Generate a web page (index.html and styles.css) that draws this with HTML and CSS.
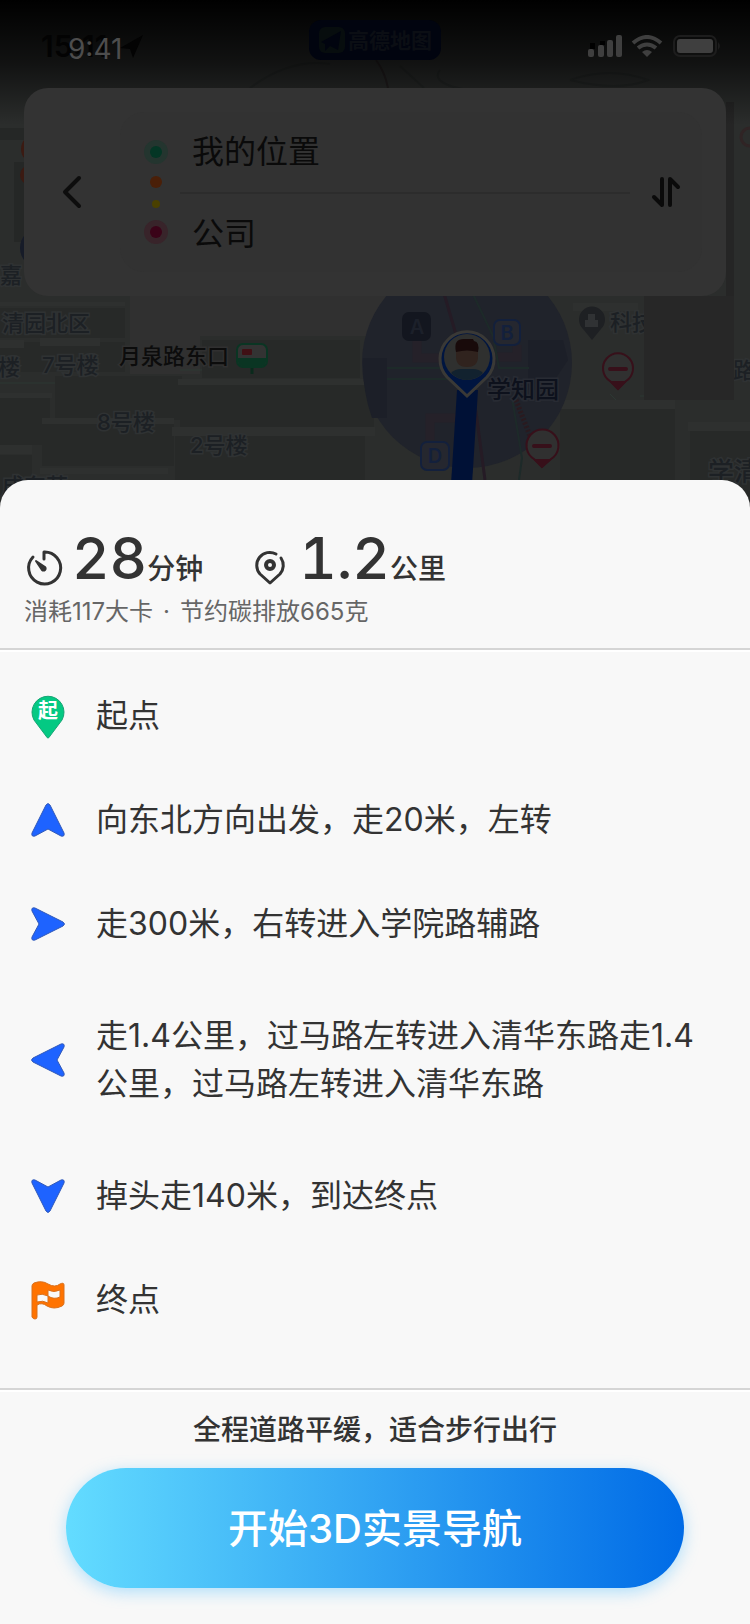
FILE: index.html
```html
<!DOCTYPE html>
<html lang="zh-CN">
<head>
  <meta charset="UTF-8">
  <meta name="viewport" content="width=device-width, initial-scale=1.0">
  <title>步行导航</title>
  <link rel="stylesheet" href="styles.css">
</head>
<body>
  <div class="top">
    <svg class="map" viewBox="0 0 750 510" preserveAspectRatio="xMidYMin slice" aria-hidden="true">
      <defs>
        <linearGradient id="fade" x1="0" y1="0" x2="0" y2="1">
          <stop offset="0" stop-color="#000"/>
          <stop offset="0.5" stop-color="#000" stop-opacity="0.6"/>
          <stop offset="1" stop-color="#000" stop-opacity="0"/>
        </linearGradient>
      </defs>
      <rect width="750" height="510" fill="#2b2d2c"/>

      <!-- buildings -->
      <path fill="#303030" d="M130 296h260v40H200v38H130z"/>
      <path fill="#272928" d="M0 308h125v30H0zM0 342h125v30H0zM202 340h158v38H202zM55 376h127v44H55zM180 385h194v42H180zM0 398h50v47H0zM42 424h132v42H42zM175 436h190v60H175zM0 455h32v40H0zM560 409h115v90H560zM690 431h60v70h-60z"/>
      <path fill="#2e302f" d="M0 302h125v4H0zM0 340h24v8H0zM40 338h60v8H40zM178 379h195v6H178zM0 393h52v5H0zM42 418h132v6H42zM172 427h203v9H172zM0 445h32v9H0zM40 468h128v6H40zM555 400h120v9H555zM688 422h62v9h-62zM573 303h65v8h-65z"/>
      <path fill="none" stroke="#2c3833" d="M0 383h55M180 370h22M610 394l6 6M640 396h35"/>
      <path fill="none" stroke="#252827" stroke-width="2" d="M250 88q40-30 80-24M440 70q-14 18 60 24M570 80q40-14 78 0q-30 12-78 0M400 66l24 22"/>
      <path fill="none" stroke="#241f20" stroke-width="2" d="M376 60q9 12 12 28"/>
      <path fill="#252525" d="M726 102h8v195h-8z"/>
      <path fill="#252726" d="M0 128h24v12H0zM14 162h10v80H14z"/>

      <!-- things peeking out from under the card -->
      <circle cx="36" cy="149" r="15" fill="#3b1a12"/>
      <circle cx="30" cy="175" r="10" fill="#3b1a12"/>
      <circle cx="40" cy="248" r="20" fill="#161b28"/>
      <circle cx="750" cy="137" r="9" fill="none" stroke="#302425" stroke-width="3"/>

      <!-- position range -->
      <circle cx="467" cy="363" r="105" fill="#20232b"/>
      <path fill="#1c1f28" d="M363 358h24v60h-15q-10-28-9-60zM528 340h35l5 20-20 30h-20z"/>
      <path fill="none" stroke="#251b25" stroke-width="3" d="M443 290l21 72 12 50 9 68"/>
      <path fill="none" stroke="#252129" stroke-width="9" d="M417 340v18h22M517 345v12h-24M430 440v-22h28"/>
      <path fill="none" stroke="#1d2a29" stroke-width="2" d="M471 290l22 46 6 32h30M387 368h60M387 379h60M512 398l10 60-3 22"/>
      <path fill="none" stroke="#2a1a1f" stroke-width="5" stroke-dasharray="2 2" d="M516 400l14 36"/>
      <path fill="#001136" d="M457 390h21l-7 110h-21z"/>

      <g class="label">
        <text x="0" y="283">嘉</text>
        <text x="2" y="331">清园北区</text>
        <text x="-2" y="375">楼</text>
        <text x="42" y="373">7号楼</text>
        <text x="97" y="430">8号楼</text>
        <text x="190" y="453">2号楼</text>
        <text x="2" y="494">成东苑</text>
        <text x="610" y="330">科技</text>
        <text x="733" y="378">路</text>
        <text x="708" y="481" font-size="26">学清</text>
      </g>
      <path fill="#272727" d="M644 296h90v104h-90z"/>
      <text class="label-strong" x="119" y="364">月泉路东口</text>
      <text class="label-park" x="487" y="398">学知园</text>

      <!-- bus stop -->
      <path d="M252 366v8" stroke="#0a2a1c" stroke-width="3"/>
      <rect x="237" y="344" width="30" height="23" rx="6" fill="#333" stroke="#0a3523" stroke-width="2"/>
      <path d="M238 358h28v3q0 5-5 5h-18q-5 0-5-5z" fill="#0a3523"/>
      <rect x="242" y="349" width="10" height="6" rx="1" fill="#401015"/>

      <!-- subway exits -->
      <g font-size="20" font-weight="600" text-anchor="middle">
        <rect x="402" y="312" width="29" height="29" rx="7" fill="#13161f"/>
        <text x="417" y="334" fill="#1c202a">A</text>
        <rect x="494" y="320" width="26" height="25" rx="6" fill="#25272f" stroke="#13203c" stroke-width="2"/>
        <text x="507" y="340" fill="#13203c">B</text>
        <rect x="421" y="442" width="28" height="28" rx="6" fill="#25272f" stroke="#13203c" stroke-width="2"/>
        <text x="435" y="463" fill="#13203c">D</text>
      </g>

      <!-- poi -->
      <path fill="#1e2023" d="M592 340l-9-11a13 13 0 1 1 18 0z"/>
      <path fill="#303234" d="M585 327v-7h3v-6h7v6h3v7z"/>

      <!-- closed roads -->
      <g fill="#303030" stroke="#37101a" stroke-width="2">
        <path d="M618 389l-8-8a15 15 0 1 1 16 0z"/>
        <path d="M542 467l-8-8a16 16 0 1 1 17 0z"/>
      </g>
      <path fill="#37101a" d="M609 381h18l-9 9zM533 459h19l-10 9z"/>
      <path fill="none" stroke="#37101a" stroke-width="4" stroke-linecap="round" d="M610 369h16M534 446h16"/>

      <!-- avatar pin -->
      <path fill="#001540" stroke="#3a3936" stroke-width="3" d="M467 396l-20-19a27 27 0 1 1 40 0z"/>
      <circle cx="467" cy="357" r="23" fill="#2f302f"/>
      <path fill="#12222f" d="M451 373q4-4 10-4h12q6 0 10 4-7 7-16 7t-16-7z"/>
      <path fill="#30231e" d="M456 347h22v10q0 10-11 10t-11-10z"/>
      <path fill="#180a0a" d="M456 352q-3-13 8-13h9l1 2q6 1 4 11-11-3-22 0z"/>

      <rect width="750" height="125" fill="url(#fade)"/>

      <!-- brand badge -->
      <rect x="309" y="20" width="132" height="40" rx="12" fill="#01040f"/>
      <rect x="319" y="27" width="26" height="26" rx="6" fill="#070d0e"/>
      <path fill="#01040f" d="M321 42l20-11-3 19-8-4-5 5v-7z"/>
      <text x="348" y="48" font-size="21" font-weight="700" fill="#0b0e14">高德地图</text>

      <!-- old clock of the captured map -->
      <text x="41" y="57" font-size="30" font-weight="600" fill="#030303">15:11</text>
      <path fill="#030303" d="M120 48l23-13-10 23-3-9z"/>
    </svg>

    <header class="status">
      <span class="time">9:41</span>
      <svg class="status-icons" viewBox="0 0 134 24" aria-hidden="true">
        <path fill="#000" d="M2 8h5v6H2zM12 6h5v4h-5z"/>
        <g fill="#3f3f3f">
          <rect x="0" y="14" width="6" height="8" rx="2"/>
          <rect x="10" y="10" width="6" height="12" rx="2"/>
          <rect x="19" y="5" width="6" height="17" rx="2"/>
          <rect x="28" y="0" width="6" height="22" rx="2"/>
          <rect x="89" y="4" width="36" height="14" rx="3"/>
          <path d="M59 22l-5-5q5-4 10 0z"/>
        </g>
        <path fill="none" stroke="#3f3f3f" stroke-width="4" d="M45 8q14-12 28 0M50 13q9-7 18 0"/>
        <rect x="86" y="1" width="42" height="20" rx="6" fill="none" stroke="#1d1d1d" stroke-width="2"/>
        <path fill="#1d1d1d" d="M130 7q4 4 0 8z"/>
      </svg>
    </header>

    <section class="route-card">
      <button class="back" aria-label="返回">
        <svg width="24" height="40" viewBox="0 0 24 40"><path d="M19 6L5 20l14 14" fill="none" stroke="#0d0d0d" stroke-width="4" stroke-linecap="round" stroke-linejoin="round"/></svg>
      </button>
      <div class="route">
        <svg class="dots" width="24" height="104" viewBox="0 0 24 104" aria-hidden="true">
          <circle cx="12" cy="12" r="12" fill="#24352f"/>
          <circle cx="12" cy="12" r="6" fill="#043625"/>
          <circle cx="12" cy="42" r="6" fill="#4a1f08"/>
          <circle cx="12" cy="64" r="4" fill="#4a4000"/>
          <circle cx="12" cy="92" r="12" fill="#38242a"/>
          <circle cx="12" cy="92" r="6" fill="#3a0318"/>
        </svg>
        <div class="places">
          <div class="place">我的位置</div>
          <div class="place">公司</div>
        </div>
        <button class="swap" aria-label="交换起点和终点">
          <svg width="32" height="34" viewBox="0 0 32 34"><path d="M12 4v26l-8-8M20 30V4l8 8" fill="none" stroke="#0a0a0a" stroke-width="4" stroke-linecap="round" stroke-linejoin="round"/></svg>
        </button>
      </div>
    </section>
  </div>

  <main class="sheet">
    <section class="summary">
      <div class="stats">
        <div class="stat">
          <svg width="40" height="40" viewBox="1 1 40 40" fill="none" stroke="#333" stroke-width="3" stroke-linecap="round" stroke-linejoin="round">
            <path d="M21 12V5a16 16 0 1 1-11 5"/>
            <path fill="#333" stroke-width="2" d="M13 14l9 6a2 2 0 1 1-3 3z"/>
          </svg>
          <span class="number">28</span><span class="unit">分钟</span>
        </div>
        <div class="stat">
          <svg width="40" height="40" viewBox="1 1 40 40" fill="none" stroke="#333" stroke-width="3" stroke-linecap="round" stroke-linejoin="round">
            <path d="M26 7A13 13 0 0 0 10 27l10 9 10-9a13 13 0 0 0 1-16"/>
            <circle cx="20" cy="18" r="4" stroke-width="4"/>
          </svg>
          <span class="number">1.2</span><span class="unit">公里</span>
        </div>
      </div>
      <p class="burn">消耗117大卡<span class="dot">·</span>节约碳排放665克</p>
    </section>

    <ol class="steps">
      <li class="step">
        <svg class="step-icon" viewBox="0 0 48 48">
          <path fill="#04c983" stroke="#16a574" d="M24 46q-1 0-2-2L10 28a16 16 0 1 1 28 0L26 44q-1 2-2 2z"/>
          <text x="24" y="26" font-size="20" font-weight="700" text-anchor="middle" fill="#fff">起</text>
        </svg>
        <span>起点</span>
      </li>
      <li class="step">
        <svg class="step-icon" viewBox="0 0 48 48"><use href="#arrow"/></svg>
        <span>向东北方向出发，走20米，左转</span>
      </li>
      <li class="step">
        <svg class="step-icon" viewBox="0 0 48 48"><use href="#arrow" transform="rotate(90 24 24)"/></svg>
        <span>走300米，右转进入学院路辅路</span>
      </li>
      <li class="step step-long">
        <svg class="step-icon" viewBox="0 0 48 48"><use href="#arrow" transform="rotate(-90 24 24)"/></svg>
        <span>走1.4公里，过马路左转进入清华东路走1.4公里，过马路左转进入清华东路</span>
      </li>
      <li class="step">
        <svg class="step-icon" viewBox="0 0 48 48"><use href="#arrow" transform="rotate(180 24 24)"/></svg>
        <span>掉头走140米，到达终点</span>
      </li>
      <li class="step">
        <svg class="step-icon" viewBox="0 0 48 48">
          <path fill="#ff7300" stroke="#d9701c" fill-rule="evenodd" d="M8 10q0-2 2-3 8-3 14 1 7 4 12 0 4-2 4 1v18q0 2-2 3-8 4-15 0-5-4-10-1v12q0 2-2 2t-3-2zM13 19v7q6-2 11 1v-7q-6-3-11-1zM24 14v6q6 4 12 1v-7q-6 3-12 0z"/>
        </svg>
        <span>终点</span>
      </li>
    </ol>

    <footer class="actions">
      <p class="tip">全程道路平缓，适合步行出行</p>
      <button class="start">开始3D实景导航</button>
    </footer>
  </main>

  <svg class="sprite" width="0" height="0" aria-hidden="true">
    <symbol id="arrow" viewBox="0 0 48 48">
      <path fill="#1e63ff" stroke="#3159b8" stroke-linejoin="round" d="M22 9q2-3 4 0l14 28q1 4-3 3l-13-7-13 7q-4 1-3-3z"/>
    </symbol>
  </svg>
</body>
</html>
```
FILE: styles.css
```css
* {
  box-sizing: border-box;
}
body {
  margin: 0;
  min-height: 100vh;
  display: flex;
  flex-direction: column;
  background-color: #2b2d2c;
  color: #333;
  font-family: Inter, "Noto Sans CJK SC", sans-serif;
}
button {
  border: none;
  padding: 0;
  background: none;
  font-family: inherit;
  cursor: pointer;
}
p {
  margin: 0;
}
svg {
  display: block;
  flex: none;
}

/* Dimmed map with the route card */
.top {
  position: relative;
  padding-bottom: 184px;
}
.map {
  position: absolute;
  top: 0;
  left: 0;
  width: 100%;
  height: calc(100% + 30px);
}
.label {
  font-size: 22px;
  font-weight: 500;
  fill: #1c2024;
  stroke: #2f3233;
  stroke-width: 3px;
  paint-order: stroke;
}
.label-strong {
  font-size: 22px;
  font-weight: 500;
  fill: #0c0c0c;
  stroke: #303030;
  stroke-width: 3px;
  paint-order: stroke;
}
.label-park {
  font-size: 24px;
  font-weight: 500;
  fill: #0d111c;
  stroke: #282b33;
  stroke-width: 3px;
  paint-order: stroke;
}
.status {
  position: relative;
  height: 88px;
  padding: 10px 28px 0 68px;
  display: flex;
  align-items: center;
  justify-content: space-between;
}
.time {
  font-size: 28px;
  line-height: 32px;
  color: #4d4d4d;
}
.status-icons {
  width: 134px;
  height: 24px;
  margin-bottom: 4px;
}
.route-card {
  position: relative;
  margin: 0 24px;
  padding: 24px;
  display: flex;
  align-items: center;
  gap: 36px;
  border-radius: 24px;
  background-color: #333;
}
.back {
  width: 36px;
  height: 64px;
  display: flex;
  align-items: center;
  justify-content: flex-end;
}
.route {
  flex: 1;
  display: flex;
  align-items: center;
  gap: 20px;
  padding: 0 20px 0 24px;
  border-radius: 24px;
  background-color: #323232;
}
.dots {
  margin-right: -8px;
}
.places {
  flex: 1;
}
.place {
  height: 80px;
  padding-left: 12px;
  color: #0a0a0a;
  font-size: 32px;
  line-height: 80px;
}
.place + .place {
  border-top: 2px solid #2c2c2c;
}

/* Bottom sheet */
.sheet {
  position: relative;
  flex: 1;
  display: flex;
  flex-direction: column;
  border-radius: 28px 28px 0 0;
  background-color: #f8f8f8;
}
.summary {
  padding: 40px 24px 20px;
  border-bottom: 2px solid #d5d5d5;
  box-shadow: 0 2px 0 #fff;
}
.stats {
  display: flex;
  gap: 48px;
}
.stat {
  display: flex;
  align-items: baseline;
}
.stat svg {
  align-self: flex-end;
  margin: 0 8px 8px 0;
}
.number {
  font-size: 58px;
  font-weight: 500;
  line-height: 76px;
  font-variant-numeric: tabular-nums;
}
.unit {
  font-size: 28px;
  font-weight: 500;
  line-height: 40px;
}
.burn {
  color: #666;
  font-size: 24px;
  line-height: 32px;
}
.burn .dot {
  margin: 0 10px;
}
.steps {
  flex: 1;
  margin: 0;
  padding: 14px 48px 14px 24px;
  list-style: none;
}
.step {
  min-height: 104px;
  display: flex;
  align-items: center;
  gap: 24px;
  font-size: 32px;
  line-height: 48px;
}
.step-long {
  min-height: 168px;
}
.step-icon {
  width: 48px;
  height: 48px;
}
.actions {
  padding: 20px 66px 36px;
  border-top: 2px solid #d5d5d5;
  box-shadow: inset 0 2px 0 #fff;
}
.tip {
  font-size: 28px;
  font-weight: 500;
  line-height: 40px;
  text-align: center;
}
.start {
  display: block;
  width: 100%;
  height: 120px;
  margin-top: 18px;
  padding-bottom: 4px;
  border-radius: 60px;
  background-image: linear-gradient(90deg, #63dcff, #006be6);
  box-shadow: 0 4px 16px rgba(66, 184, 255, 0.4);
  color: #fff;
  font-size: 40px;
  font-weight: 500;
}
.sprite {
  position: absolute;
}
```
